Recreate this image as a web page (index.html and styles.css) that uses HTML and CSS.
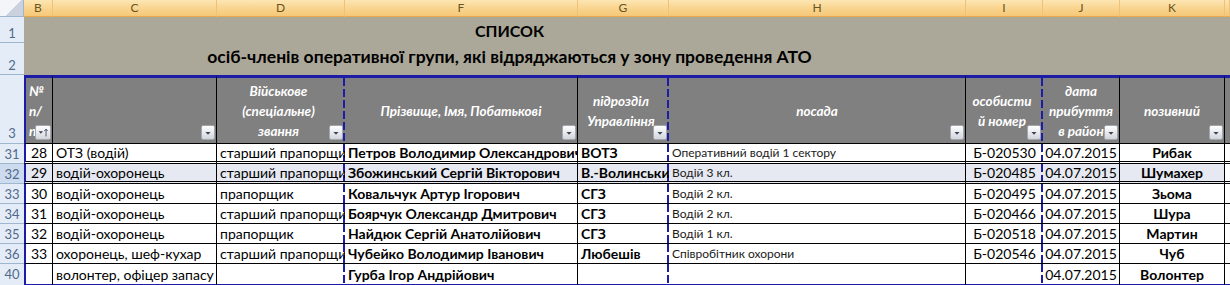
FILE: index.html
```html
<!DOCTYPE html>
<html lang="uk">
<head>
<meta charset="utf-8">
<title>Список</title>
<link rel="stylesheet" href="styles.css">
</head>
<body>
<div class="sheet">
  <div class="row cols colhdr">
    <div class="corner"></div>
    <div class="ch">B</div>
    <div class="ch">C</div>
    <div class="ch">D</div>
    <div class="ch">F</div>
    <div class="ch">G</div>
    <div class="ch">H</div>
    <div class="ch">I</div>
    <div class="ch">J</div>
    <div class="ch">K</div>
    <div class="ch"></div>
  </div>

  <div class="row trow r1">
    <div class="rh">1</div>
    <div class="tc"></div>
    <div class="tc title">СПИСОК</div>
    <div class="tc"></div>
  </div>
  <div class="row trow r2">
    <div class="rh">2</div>
    <div class="tc"></div>
    <div class="tc title sub">осіб-членів оперативної групи, які відряджаються у зону проведення АТО</div>
    <div class="tc"></div>
  </div>

  <div class="row cols hdr">
    <div class="rh">3</div>
    <div class="hc first left">№<br>п/<br>п<span class="fb"><svg width="16" height="15" viewBox="0 0 16 15"><polygon points="3,6 8,6 5.5,9" fill="#3a4356"/><path d="M11.5 12 V4 M9.5 6 L11.5 3.5 L13.5 6" stroke="#3a4356" stroke-width="1" fill="none"/></svg></span></div>
    <div class="hc"><span class="fb"><svg width="14" height="15" viewBox="0 0 14 15"><polygon points="4,7 10,7 7,10" fill="#3a4356"/></svg></span></div>
    <div class="hc dash">Військове<br>(спеціальне)<br>звання<span class="fb"><svg width="14" height="15" viewBox="0 0 14 15"><polygon points="4,7 10,7 7,10" fill="#3a4356"/></svg></span></div>
    <div class="hc">Прізвище, Імя, Побатькові<span class="fb"><svg width="14" height="15" viewBox="0 0 14 15"><polygon points="4,7 10,7 7,10" fill="#3a4356"/></svg></span></div>
    <div class="hc dash">підрозділ<br>Управління<span class="fb"><svg width="14" height="15" viewBox="0 0 14 15"><polygon points="4,7 10,7 7,10" fill="#3a4356"/></svg></span></div>
    <div class="hc">посада<span class="fb"><svg width="14" height="15" viewBox="0 0 14 15"><polygon points="4,7 10,7 7,10" fill="#3a4356"/></svg></span></div>
    <div class="hc dash">особисти<br>й номер<span class="fb"><svg width="14" height="15" viewBox="0 0 14 15"><polygon points="4,7 10,7 7,10" fill="#3a4356"/></svg></span></div>
    <div class="hc">дата<br>прибуття<br>в район<span class="fb"><svg width="14" height="15" viewBox="0 0 14 15"><polygon points="4,7 10,7 7,10" fill="#3a4356"/></svg></span></div>
    <div class="hc">позивний<span class="fb"><svg width="14" height="15" viewBox="0 0 14 15"><polygon points="4,7 10,7 7,10" fill="#3a4356"/></svg></span></div>
    <div class="hc rest"></div>
  </div>

  <div class="row cols data dbl">
    <div class="rh">31</div>
    <div class="c first ctr">28</div>
    <div class="c">ОТЗ (водій)</div>
    <div class="c dash">старший прапорщик</div>
    <div class="c b">Петров Володимир Олександрович</div>
    <div class="c b dash">ВОТЗ</div>
    <div class="c sm">Оперативний водій 1 сектору</div>
    <div class="c ctr dash">Б-020530</div>
    <div class="c ctr">04.07.2015</div>
    <div class="c ctr b">Рибак</div>
    <div class="c rest"></div>
  </div>
  <div class="row cols data dbl sel">
    <div class="rh">32</div>
    <div class="c first ctr">29</div>
    <div class="c">водій-охоронець</div>
    <div class="c dash">старший прапорщик</div>
    <div class="c b">Збожинський Сергій Вікторович</div>
    <div class="c b dash">В.-Волинський</div>
    <div class="c sm">Водій 3 кл.</div>
    <div class="c ctr dash">Б-020485</div>
    <div class="c ctr">04.07.2015</div>
    <div class="c ctr b">Шумахер</div>
    <div class="c rest"></div>
  </div>
  <div class="row cols data">
    <div class="rh">33</div>
    <div class="c first ctr">30</div>
    <div class="c">водій-охоронець</div>
    <div class="c dash">прапорщик</div>
    <div class="c b">Ковальчук Артур Ігорович</div>
    <div class="c b dash">СГЗ</div>
    <div class="c sm">Водій 2 кл.</div>
    <div class="c ctr dash">Б-020495</div>
    <div class="c ctr">04.07.2015</div>
    <div class="c ctr b">Зьома</div>
    <div class="c rest"></div>
  </div>
  <div class="row cols data">
    <div class="rh">34</div>
    <div class="c first ctr">31</div>
    <div class="c">водій-охоронець</div>
    <div class="c dash">старший прапорщик</div>
    <div class="c b">Боярчук Олександр Дмитрович</div>
    <div class="c b dash">СГЗ</div>
    <div class="c sm">Водій 2 кл.</div>
    <div class="c ctr dash">Б-020466</div>
    <div class="c ctr">04.07.2015</div>
    <div class="c ctr b">Шура</div>
    <div class="c rest"></div>
  </div>
  <div class="row cols data">
    <div class="rh">35</div>
    <div class="c first ctr">32</div>
    <div class="c">водій-охоронець</div>
    <div class="c dash">прапорщик</div>
    <div class="c b">Найдюк Сергій Анатолійович</div>
    <div class="c b dash">СГЗ</div>
    <div class="c sm">Водій 1 кл.</div>
    <div class="c ctr dash">Б-020518</div>
    <div class="c ctr">04.07.2015</div>
    <div class="c ctr b">Мартин</div>
    <div class="c rest"></div>
  </div>
  <div class="row cols data">
    <div class="rh">36</div>
    <div class="c first ctr">33</div>
    <div class="c">охоронець, шеф-кухар</div>
    <div class="c dash">старший прапорщик</div>
    <div class="c b">Чубейко Володимир Іванович</div>
    <div class="c b dash">Любешів</div>
    <div class="c sm">Співробітник охорони</div>
    <div class="c ctr dash">Б-020546</div>
    <div class="c ctr">04.07.2015</div>
    <div class="c ctr b">Чуб</div>
    <div class="c rest"></div>
  </div>
  <div class="row cols data last">
    <div class="rh">40</div>
    <div class="c first ctr"></div>
    <div class="c">волонтер, офіцер запасу</div>
    <div class="c dash"></div>
    <div class="c b">Гурба Ігор Андрійович</div>
    <div class="c b dash"></div>
    <div class="c sm"></div>
    <div class="c ctr dash"></div>
    <div class="c ctr">04.07.2015</div>
    <div class="c ctr b">Волонтер</div>
    <div class="c rest"></div>
  </div>
</div>
</body>
</html>
```
FILE: styles.css
```css
* { box-sizing: border-box; }
html, body { margin: 0; padding: 0; background: #fff; }
body { width: 1230px; height: 285px; overflow: hidden; font-family: Lato, "Open Sans", sans-serif; }

.sheet { width: 1230px; }
.row { display: grid; }
.cols { grid-template-columns: 24px 29px 164px 128px 233px 91px 297px 77px 77px 105px 1fr; }
.trow { grid-template-columns: 24px 29px 913px 1fr; }

/* column letters */
.colhdr { height: 17px; }
.corner {
  background: linear-gradient(135deg, #f3f5f8 0 55%, #c9d2de 55% 100%);
  border-right: 1px solid #9eb6ce;
  border-bottom: 1px solid #9eb6ce;
}
.ch {
  background: linear-gradient(#fde6b4, #f8d28a 60%, #f6c878);
  border-right: 1px solid #eec27a;
  border-bottom: 1px solid #e9a94a;
  color: #6a5323;
  font-size: 12px;
  line-height: 16px;
  text-align: center;
}

/* row numbers */
.rh {
  background: #e4ecf7;
  border-bottom: 1px solid #9eb6ce;
  color: #52698a;
  font-size: 13px;
  display: flex;
  align-items: flex-end;
  justify-content: center;
  padding-bottom: 1px;
}

/* title */
.r1 { height: 26px; }
.r2 { height: 32px; }
.tc { background: #aca899; }
.title {
  font-weight: 700;
  font-size: 16px;
  color: #000;
  display: flex;
  align-items: center;
  justify-content: center;
  white-space: nowrap;
}
.title.sub { font-size: 17.5px; align-items: flex-end; padding-bottom: 8px; }

/* header */
.hdr { height: 69px; }
.hdr .hc {
  position: relative;
  background-color: #808080;
  border-top: 3px solid #1c1ca6;
  border-right: 1px solid #000;
  border-bottom: 1px solid #000;
  color: #fff;
  font-weight: 700;
  font-style: italic;
  font-size: 13.5px;
  line-height: 20px;
  text-align: center;
  display: flex;
  align-items: center;
  justify-content: center;
  white-space: nowrap;
  overflow: hidden;
}
.hdr .hc.left { justify-content: flex-start; text-align: left; padding-left: 3px; }
.hdr .rh { padding-bottom: 2px; }
.hdr .hc.rest { border-right: 0; }
.fb {
  position: absolute;
  right: 1px;
  bottom: 3px;
  display: block;
  height: 15px;
  border: 1px solid #a2a6ae;
  border-radius: 2px;
  background: linear-gradient(#ffffff, #e4e6ea 60%, #d2d5db);
  line-height: 0;
}
.fb svg { display: block; width: 12px; height: 13px; }
.first .fb svg { width: 14px; }

.first { border-left: 2px solid #1c1ca6 !important; }
.dash {
  border-right: 0 !important;
  padding-right: 5px;
  background-image: repeating-linear-gradient(to bottom, #1c1ca6 0 8px, transparent 8px 11px);
  background-size: 2px 100%;
  background-position: right top;
  background-repeat: no-repeat;
}
.hdr .hc.dash .fb { right: 2px; }

/* data */
.data { height: 20px; }
.data .c {
  border-right: 1px solid #000;
  border-bottom: 1px solid #000;
  font-size: 14px;
  color: #000;
  padding: 0 3px;
  white-space: nowrap;
  overflow: hidden;
  display: flex;
  align-items: center;
  background-color: #fff;
}
.data .c.ctr { justify-content: center; }
.data .c.b { font-weight: 700; }
.data .c.sm { font-size: 12px; color: #1a1a1a; }
.data .c.rest { border-right: 0; }
.data .rh { align-items: center; padding-bottom: 0; }
.data.dbl .c { border-bottom: 3px double #000; }
.data.sel .c { background-color: #e6e9f1; }
.data.sel .c.rest { background-color: #fff; }
.data.sel .rh { background: #cddbee; }
.data.last { height: 22px; }
.data.last .c { border-bottom: 2px solid #1c1ca6; }
.data.last .rh { border-bottom: 0; padding-bottom: 2px; }
```
